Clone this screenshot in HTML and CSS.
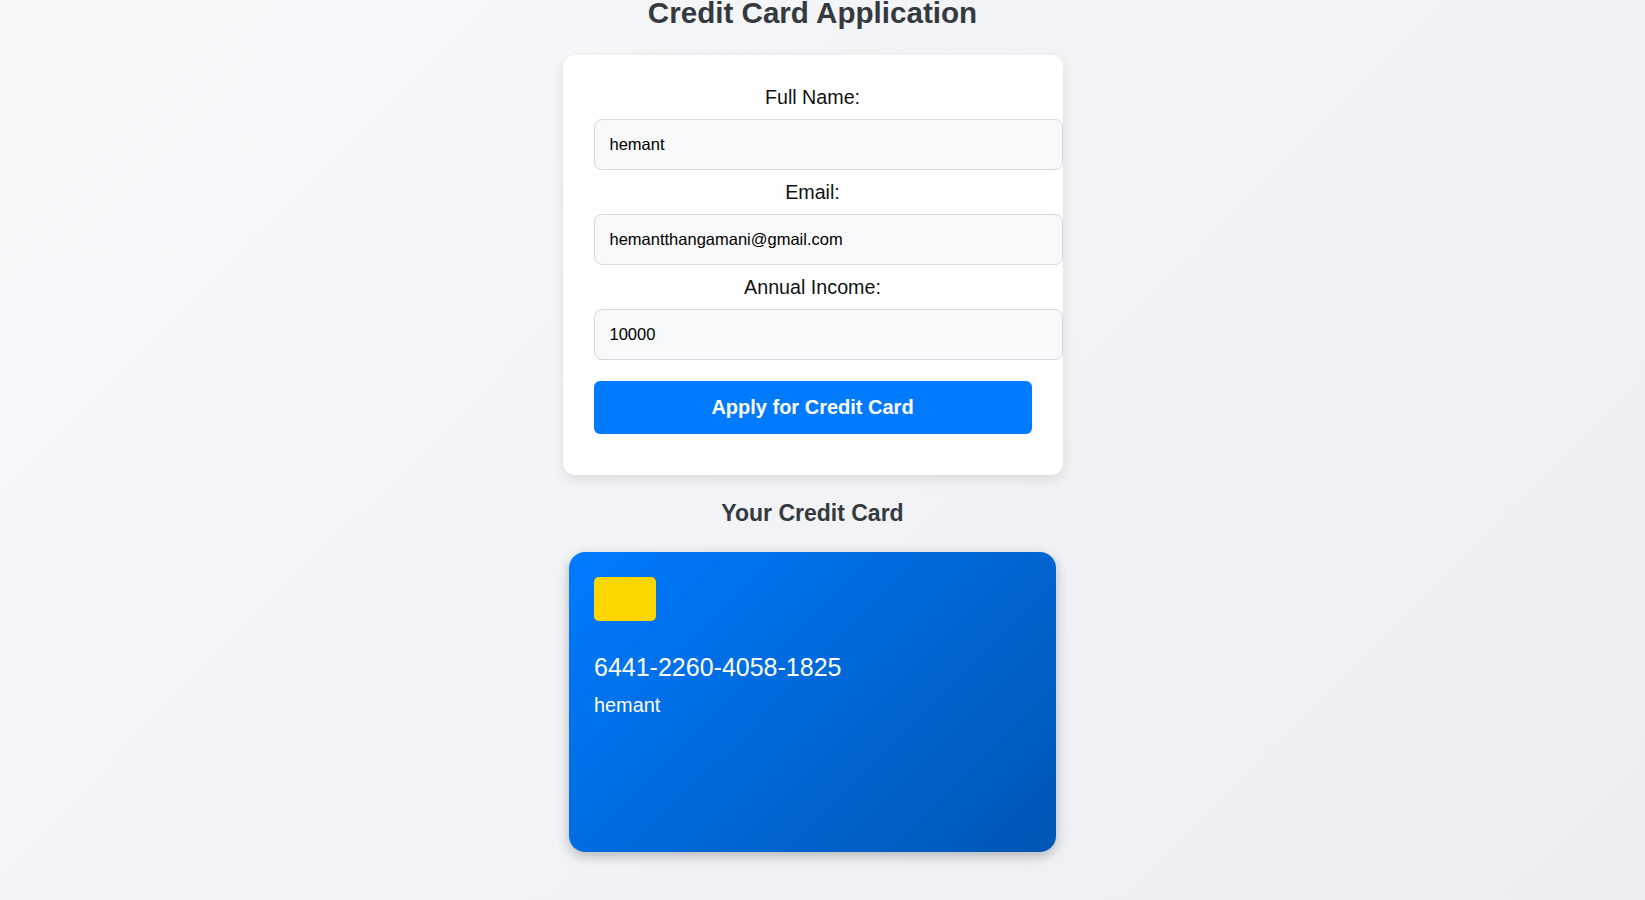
FILE: index.html
```html
<!DOCTYPE html>
<html lang="en">
<head>
<meta charset="UTF-8">
<title>Credit Card Application</title>
<link rel="stylesheet" href="styles.css">
</head>
<body>
<div class="page">
  <h1 class="title">Credit Card Application</h1>
  <form class="form-card">
    <label class="field-label" for="name">Full Name:</label>
    <input class="field-input" id="name" type="text" value="hemant">
    <label class="field-label" for="email">Email:</label>
    <input class="field-input" id="email" type="email" value="hemantthangamani@gmail.com">
    <label class="field-label" for="income">Annual Income:</label>
    <input class="field-input" id="income" type="text" value="10000">
    <button class="apply-btn" type="button">Apply for Credit Card</button>
  </form>
  <h2 class="section-title">Your Credit Card</h2>
  <div class="credit-card">
    <div class="chip"></div>
    <div class="card-number">6441-2260-4058-1825</div>
    <div class="card-name">hemant</div>
  </div>
</div>
</body>
</html>
```

FILE: styles.css
```css
html, body {
  margin: 0;
  padding: 0;
  height: 100%;
}

body {
  font-family: "Liberation Sans", Arial, sans-serif;
  background: linear-gradient(135deg, #f7f8fa 0%, #eceef1 100%);
  overflow: hidden;
}

.page {
  width: 1625px;
  display: flex;
  flex-direction: column;
  align-items: center;
}

.title {
  margin: -4.5px 0 25.5px;
  font-size: 29.6px;
  font-weight: bold;
  color: #343a40;
  line-height: 34px;
}

.form-card {
  box-sizing: border-box;
  width: 500px;
  background: #ffffff;
  border-radius: 12px;
  padding: 30px 31px 30px;
  box-shadow: 0 4px 12px rgba(0, 0, 0, 0.1);
  display: flex;
  flex-direction: column;
}

.field-label {
  display: block;
  text-align: center;
  font-size: 19.7px;
  line-height: 22.6px;
  color: #111;
  padding-top: 1px;
  margin-bottom: 10px;
}

.field-input {
  display: block;
  box-sizing: content-box;
  width: 438px;
  padding: 15px 14px 15px 15px;
  margin: 0 0 10.4px;
  font-family: "Liberation Sans", Arial, sans-serif;
  font-size: 16.5px;
  line-height: 19px;
  height: 19px;
  color: #000;
  background: #f8f9fa;
  border: 1px solid #d5d8dc;
  border-radius: 8px;
  outline: none;
}

.apply-btn {
  margin: 11.5px 0 10.5px;
  width: 100%;
  padding: 15px 0;
  font-family: "Liberation Sans", Arial, sans-serif;
  font-size: 20px;
  line-height: 23px;
  font-weight: bold;
  color: #ffffff;
  background: #007bff;
  border: none;
  border-radius: 6px;
  cursor: pointer;
}

.section-title {
  margin: 25.5px 0 25px;
  font-size: 23px;
  line-height: 26.4px;
  font-weight: bold;
  color: #343a40;
}

.credit-card {
  box-sizing: border-box;
  width: 487px;
  height: 300px;
  padding: 25px;
  border-radius: 16px;
  background: linear-gradient(135deg, #007bff 0%, #0056b3 100%);
  box-shadow: 0 4px 12px rgba(0, 0, 0, 0.25);
  color: #ffffff;
}

.chip {
  width: 62px;
  height: 44px;
  background: #ffd700;
  border-radius: 5px;
  margin-bottom: 32px;
}

.card-number {
  font-size: 25px;
  line-height: 28.6px;
  margin-bottom: 13px;
}

.card-name {
  font-size: 19.9px;
  line-height: 22.6px;
}
```
